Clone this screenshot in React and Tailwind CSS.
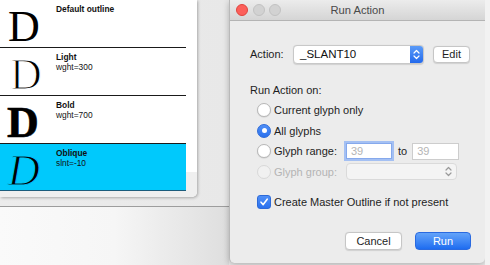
import React from 'react';

const rows = [
  { name: 'Default outline', sub: '', glyph: 'regular' },
  { name: 'Light', sub: 'wght=300', glyph: 'light' },
  { name: 'Bold', sub: 'wght=700', glyph: 'bold' },
  { name: 'Oblique', sub: 'slnt=-10', glyph: 'italic' },
];

const Glyph = ({ kind }) => {
  const base = "font-['Liberation_Serif',serif] text-[44px] leading-[44px] mt-[5px] text-black";
  if (kind === 'light') {
    return <div className={`${base} pl-[10px] [-webkit-text-stroke:1.2px_#fff]`}>D</div>;
  }
  if (kind === 'bold') {
    return <div className={`${base} pl-[7px] font-bold [-webkit-text-stroke:0.6px_#000]`}>D</div>;
  }
  if (kind === 'italic') {
    return <div className={`${base} pl-[8px] italic [-webkit-text-stroke:1px_#00c9fc]`}>D</div>;
  }
  return <div className={`${base} pl-[8px]`}>D</div>;
};

const MasterList = () => (
  <div className="w-[197px] h-[197px] bg-white rounded-br-[5px] shadow-[1px_1px_3px_rgba(0,0,0,0.28)] overflow-hidden flex flex-col">
    <div className="flex h-[191px]">
      <div className="w-[186px] flex flex-col">
        {rows.map((r, i) => (
          <div
            key={r.name}
            className={`flex border-b ${
              i === 3 ? 'h-[47px] bg-[#00c9fc] border-[#1b5c7c]' : 'h-[48px] bg-white border-[#1a1a1a]'
            }`}
          >
            <div className="w-[56px]">
              <Glyph kind={r.glyph} />
            </div>
            <div className="pt-[4px] text-[8.4px] leading-[10px] text-[#111]">
              <div className="font-bold">{r.name}</div>
              {r.sub && <div>{r.sub}</div>}
            </div>
          </div>
        ))}
      </div>
      <div className="w-[11px] flex flex-col">
        <div className="flex-1 bg-white" />
        <div className="h-[19px] bg-[#efefef]" />
      </div>
    </div>
    <div className="flex-1 bg-[#efefef]" />
  </div>
);

const Radio = ({ checked, disabled }) => (
  <div
    className={`w-[14px] h-[14px] rounded-full flex items-center justify-center shrink-0 ${
      checked
        ? 'bg-gradient-to-b from-[#4f8ff7] to-[#2a71ee] border border-[#2d6ad8]'
        : disabled
        ? 'bg-[#f1f1f1] border border-[#d8d8d8]'
        : 'bg-white border border-[#b8b8b8] shadow-[0_0.5px_1px_rgba(0,0,0,0.15)]'
    }`}
  >
    {checked && <div className="w-[5px] h-[5px] rounded-full bg-white" />}
  </div>
);

const Chevrons = ({ color }) => (
  <svg width="7" height="11" viewBox="0 0 7 11" fill="none">
    <path d="M1 4 L3.5 1.5 L6 4" stroke={color} strokeWidth="1.2" strokeLinecap="round" strokeLinejoin="round" />
    <path d="M1 7 L3.5 9.5 L6 7" stroke={color} strokeWidth="1.2" strokeLinecap="round" strokeLinejoin="round" />
  </svg>
);

const RunActionDialog = () => (
  <div className="w-[256px] h-[263px] bg-[#ececec] border-l border-[#b9b9b9] rounded-b-[5px] shadow-[0_2px_6px_rgba(0,0,0,0.25)] flex flex-col text-[11px] text-[#1e1e1e]">
    <div className="h-[21px] bg-gradient-to-b from-[#ececec] to-[#d5d5d5] border-b border-[#b4b4b4] flex items-center">
      <div className="w-[60px] flex items-center gap-[4.5px] pl-[6px]">
        <div className="w-[12px] h-[12px] rounded-full bg-[#fc5f5a] border border-[#e0443e]" />
        <div className="w-[12px] h-[12px] rounded-full bg-[#d2d2d2] border border-[#c2c2c2]" />
        <div className="w-[12px] h-[12px] rounded-full bg-[#d2d2d2] border border-[#c2c2c2]" />
      </div>
      <div className="flex-1 text-center text-[11.2px] text-[#4a4a4a]">Run Action</div>
      <div className="w-[60px]" />
    </div>

    <div className="pl-[20px] flex flex-col">
      <div className="mt-[24px] h-[19px] flex items-center">
        <div className="w-[43px]">Action:</div>
        <div className="w-[131px] h-[19px] bg-white rounded-[4px] border border-[#c8c8c8] shadow-[0_0.5px_1px_rgba(0,0,0,0.12)] flex overflow-hidden">
          <div className="flex-1 pl-[6px] flex items-center text-[11.5px] text-[#111]">_SLANT10</div>
          <div className="w-[13px] bg-gradient-to-b from-[#5b9bf8] to-[#2369ec] flex items-center justify-center">
            <Chevrons color="#ffffff" />
          </div>
        </div>
        <div className="ml-[9px] w-[37px] h-[17px] bg-white rounded-[4px] border border-[#c6c6c6] shadow-[0_0.5px_1px_rgba(0,0,0,0.12)] flex items-center justify-center">
          Edit
        </div>
      </div>

      <div className="mt-[19px] leading-[14px]">Run Action on:</div>

      <div className="mt-[3px] flex flex-col pl-[7px]">
        <div className="h-[20.5px] flex items-center gap-[3px]">
          <Radio />
          <span>Current glyph only</span>
        </div>
        <div className="h-[20.5px] flex items-center gap-[3px]">
          <Radio checked />
          <span>All glyphs</span>
        </div>
        <div className="h-[20.5px] flex items-center gap-[3px]">
          <Radio />
          <span className="w-[69px]">Glyph range:</span>
          <div className="w-[46px] h-[16px] bg-white border border-[#86a9ec] shadow-[0_0_0_2px_#a4c0f3] flex items-center pl-[4px] text-[#b5b5b5]">
            39
          </div>
          <span className="ml-[3px]">to</span>
          <div className="ml-[2px] w-[47px] h-[17px] bg-white border border-[#cdcdcd] flex items-center pl-[4px] text-[#b5b5b5]">
            39
          </div>
        </div>
        <div className="h-[20.5px] flex items-center gap-[3px] text-[#b4b4b4]">
          <Radio disabled />
          <span className="w-[69px]">Glyph group:</span>
          <div className="w-[111px] h-[17px] bg-[#f4f4f4] rounded-[4px] border border-[#dadada] flex items-center justify-end pr-[4px]">
            <Chevrons color="#9a9a9a" />
          </div>
        </div>
      </div>

      <div className="mt-[10px] h-[20px] flex items-center gap-[3px] pl-[7px]">
        <div className="w-[14px] h-[14px] rounded-[3px] bg-gradient-to-b from-[#4f8ff7] to-[#2a71ee] border border-[#2d6ad8] flex items-center justify-center">
          <svg width="10" height="10" viewBox="0 0 10 10" fill="none">
            <path d="M2 5.2 L4.2 7.6 L8.2 2.2" stroke="#fff" strokeWidth="1.6" strokeLinecap="round" strokeLinejoin="round" />
          </svg>
        </div>
        <span>Create Master Outline if not present</span>
      </div>

      <div className="mt-[20px] flex justify-end pr-[14px] gap-[13px]">
        <div className="w-[57px] h-[18px] bg-white rounded-[4px] border border-[#c6c6c6] shadow-[0_0.5px_1px_rgba(0,0,0,0.12)] flex items-center justify-center">
          Cancel
        </div>
        <div className="w-[56px] h-[18px] rounded-[4px] bg-gradient-to-b from-[#63a3f9] to-[#1d6cf0] border border-[#2a6ae0] text-white flex items-center justify-center">
          Run
        </div>
      </div>
    </div>
  </div>
);

export default function App() {
  return (
    <div className="w-[490px] h-[265px] flex bg-[#ececec] overflow-hidden font-['Liberation_Sans',Arial,sans-serif]">
      <div className="w-[229px] flex flex-col">
        <div className="h-[207px] bg-gradient-to-r from-[#ececec] to-[#e8e8e8] border-b border-[#9d9d9d]">
          <MasterList />
        </div>
        <div className="flex-1 bg-gradient-to-r from-[#fafafa] via-[#f6f6f6] to-[#dedede]" />
      </div>
      <RunActionDialog />
      <div className="flex-1 bg-[#f2f2f2]" />
    </div>
  );
}
